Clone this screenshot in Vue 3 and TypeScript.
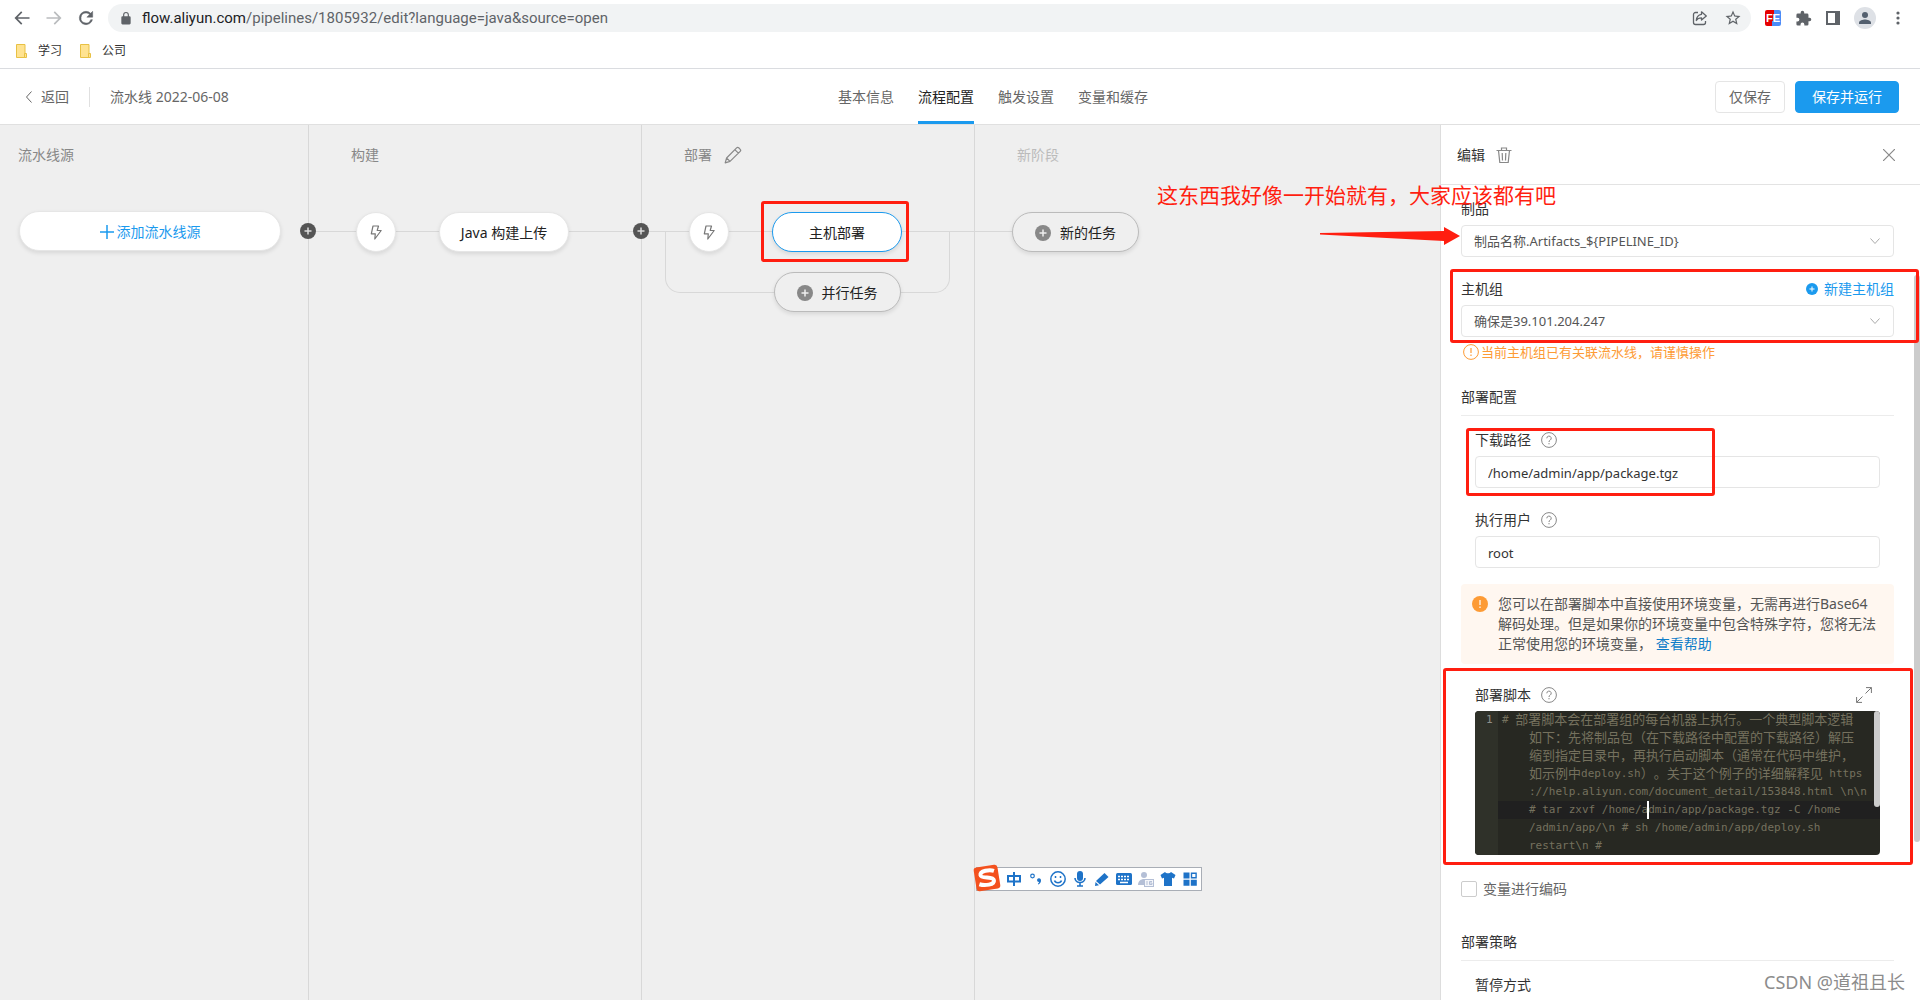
<script setup lang="ts">
import { ref } from 'vue'

interface Bookmark { label: string }
interface ScriptRow { text: { t: string; wide: boolean }[]; first: boolean; active: boolean }

const bookmarks: Bookmark[] = [{ label: '学习' }, { label: '公司' }]
const tabs: string[] = ['基本信息', '流程配置', '触发设置', '变量和缓存']
const activeTab = ref(1)

const artifact = ref('制品名称.Artifacts_${PIPELINE_ID}')
const hostGroup = ref('确保是39.101.204.247')
const downloadPath = ref('/home/admin/app/package.tgz')
const runUser = ref('root')
const encodeVars = ref(false)

const lines: string[] = [
  '# 部署脚本会在部署组的每台机器上执行。一个典型脚本逻辑',
  '如下：先将制品包（在下载路径中配置的下载路径）解压',
  '缩到指定目录中，再执行启动脚本（通常在代码中维护，',
  '如示例中deploy.sh）。关于这个例子的详细解释见 https',
  '://help.aliyun.com/document_detail/153848.html \\n\\n',
  '# tar zxvf /home/admin/app/package.tgz -C /home',
  '/admin/app/\\n # sh /home/admin/app/deploy.sh',
  'restart\\n #',
]

// Full-width runs are two code columns per glyph, so they get their own size.
const rows: ScriptRow[] = lines.map((line, i) => ({
  text: (line.match(/[\x20-\x7e]+|[^\x20-\x7e]+/g) ?? []).map((t) => ({ t, wide: t.charCodeAt(0) > 126 })),
  first: i === 0,
  active: i === 5,
}))
</script>

<template>
  <div class="window">
    <header class="browser">
      <div class="toolbar">
        <button class="tool" aria-label="后退"><svg width="20" height="20" viewBox="0 0 24 24" fill="#5f6368"><path d="M21 11H6.8l5.6-5.6L11 4l-8 8 8 8 1.4-1.4L6.8 13H21z" /></svg></button>
        <button class="tool" aria-label="前进"><svg width="20" height="20" viewBox="0 0 24 24" fill="#babcbe"><path d="M3 11h14.2l-5.6-5.6L13 4l8 8-8 8-1.4-1.4 5.6-5.6H3z" /></svg></button>
        <button class="tool" aria-label="刷新"><svg width="20" height="20" viewBox="0 0 24 24" fill="#5f6368"><path d="M17.65 6.35A7.96 7.96 0 0 0 12 4a8 8 0 1 0 7.73 10h-2.08A6 6 0 1 1 12 6c1.66 0 3.14.69 4.22 1.78L13 11h7V4z" stroke="#5f6368" stroke-width=".6" /></svg></button>
        <div class="omnibox">
          <svg width="14" height="14" viewBox="0 0 24 24" fill="#5f6368"><path d="M18 9h-1V6.500a5 5 0 0 0-10 0V9H6a2 2 0 0 0-2 2v10a2 2 0 0 0 2 2h12a2 2 0 0 0 2-2V11a2 2 0 0 0-2-2zm-3 0H9V6.500a3 3 0 0 1 6 0z" /></svg>
          <span class="url"><b>flow.aliyun.com</b>/pipelines/1805932/edit?language=java&amp;source=open</span>
          <svg width="16" height="16" viewBox="0 0 16 16" fill="none" stroke="#5f6368" stroke-width="1.300"><path d="M6 2.500H3.500a2 2 0 0 0-2 2v8a2 2 0 0 0 2 2h8a2 2 0 0 0 2-2V11" /><path d="M9.500 1.800 14.300 6 9.500 10V7.800C7 7.800 5.300 8.700 4.300 10.500 4.500 7 6.500 4.800 9.500 4.300z" stroke-linejoin="round" /></svg>
          <svg width="18" height="18" viewBox="0 0 24 24" fill="#5f6368"><path d="m22 9.240-7.190-.62L12 2 9.190 8.630 2 9.240l5.460 4.730L5.820 21 12 17.270 18.180 21l-1.630-7.030zM12 15.400l-3.760 2.270 1-4.280-3.320-2.880 4.380-.38L12 6.100l1.710 4.040 4.380.38-3.320 2.880 1 4.280z" /></svg>
        </div>
        <div class="extensions">
          <span class="fe">FE</span>
          <svg width="17" height="17" viewBox="0 0 24 24" fill="#5f6368"><path d="M20.500 11H19V7a2 2 0 0 0-2-2h-4V3.500a2.500 2.500 0 0 0-5 0V5H4a2 2 0 0 0-2 2v3.800h1.500a2.700 2.700 0 0 1 0 5.400H2V20a2 2 0 0 0 2 2h3.800v-1.500a2.700 2.700 0 0 1 5.400 0V22H17a2 2 0 0 0 2-2v-4h1.500a2.500 2.500 0 0 0 0-5z" /></svg>
          <svg width="14" height="14" viewBox="0 0 14 14"><path d="M0 0h14v14H0z" fill="#5f6368" /><path d="M2 2h7v10H2z" fill="#fff" /></svg>
          <svg width="22" height="22" viewBox="0 0 22 22"><circle cx="11" cy="11" r="11" fill="#dee1e6" /><circle cx="11" cy="8" r="3" fill="#54606f" /><path d="M5 17v-1.500c0-2 4-3 6-3s6 1 6 3V17z" fill="#54606f" /></svg>
          <svg width="4" height="14" viewBox="0 0 4 14" fill="#5f6368"><circle cx="2" cy="2" r="1.600" /><circle cx="2" cy="7" r="1.600" /><circle cx="2" cy="12" r="1.600" /></svg>
        </div>
      </div>
      <nav class="bookmarks">
        <a v-for="b in bookmarks" :key="b.label" href="#" class="bookmark">
          <svg width="12" height="14" viewBox="0 0 12 14"><path d="M.5.5h8.500v13H.5z" fill="#ffe391" stroke="#e8c144" /><path d="M8.500 9.500h2v4h-2z" fill="#ffe391" stroke="#e8c144" /></svg>{{ b.label }}
        </a>
      </nav>
    </header>

    <header class="appbar">
      <div class="crumbs">
        <a href="#" class="back"><svg width="8" height="14" viewBox="0 0 8 14" fill="none" stroke="#666"><path d="M6.500 1.500 1.500 7l5 5.500" /></svg>返回</a>
        <span class="title">流水线 2022-06-08</span>
      </div>
      <nav class="tabs">
        <a v-for="(t, i) in tabs" :key="t" href="#" :class="{ on: i === activeTab }" @click.prevent="activeTab = i">{{ t }}</a>
      </nav>
      <div class="actions">
        <button class="btn">仅保存</button>
        <button class="btn primary">保存并运行</button>
      </div>
    </header>

    <main class="work">
      <section class="canvas">
        <div class="stage source">
          <h2>流水线源</h2>
          <button class="pill add"><svg width="14" height="14" viewBox="0 0 14 14" stroke="#1b9aee" stroke-width="1.500"><path d="M7 0v14M0 7h14" /></svg>添加流水线源</button>
        </div>

        <div class="stage">
          <h2>构建</h2>
          <div class="track">
            <button class="joint" aria-label="添加阶段"><svg width="16" height="16" viewBox="0 0 16 16"><circle cx="8" cy="8" r="8" fill="#555" /><path d="M8 4.500v7M4.500 8h7" stroke="#ddd" stroke-width="1.500" /></svg></button>
            <button class="bolt" aria-label="触发"><svg width="14" height="16" viewBox="0 0 14 16" fill="none" stroke="#777" stroke-width="1.200" stroke-linejoin="round"><path d="M4 2h5.500L8.200 6.500h4L5.800 15 6.300 9.800H2.300z" /></svg></button>
            <button class="pill">Java 构建上传</button>
          </div>
        </div>

        <div class="stage">
          <h2>部署<svg width="18" height="18" viewBox="0 0 18 18" fill="none" stroke="#888" stroke-width="1.200" stroke-linejoin="round"><path d="M1.200 16.800 2.600 12 12.600 1.800a1.500 1.500 0 0 1 2.100 0l1.500 1.500a1.500 1.500 0 0 1 0 2.100L6 15.400zM10.800 3.600l3.600 3.600M2.600 12 6 15.400" /></svg></h2>
          <div class="track">
            <span class="loop"></span>
            <button class="joint" aria-label="添加阶段"><svg width="16" height="16" viewBox="0 0 16 16"><circle cx="8" cy="8" r="8" fill="#555" /><path d="M8 4.500v7M4.500 8h7" stroke="#ddd" stroke-width="1.500" /></svg></button>
            <button class="bolt" aria-label="触发"><svg width="14" height="16" viewBox="0 0 14 16" fill="none" stroke="#777" stroke-width="1.200" stroke-linejoin="round"><path d="M4 2h5.500L8.200 6.500h4L5.800 15 6.300 9.800H2.300z" /></svg></button>
            <div class="jobs">
              <div class="marked"><button class="pill selected">主机部署</button><span class="mark job-mark"></span></div>
              <button class="pill ghost"><svg width="16" height="16" viewBox="0 0 16 16"><circle cx="8" cy="8" r="8" fill="#888" /><path d="M8 4.500v7M4.500 8h7" stroke="#eee" stroke-width="1.500" /></svg>并行任务</button>
            </div>
          </div>
        </div>

        <div class="stage last">
          <h2>新阶段</h2>
          <div class="track">
            <button class="pill ghost"><svg width="16" height="16" viewBox="0 0 16 16"><circle cx="8" cy="8" r="8" fill="#888" /><path d="M8 4.500v7M4.500 8h7" stroke="#eee" stroke-width="1.500" /></svg>新的任务</button>
          </div>
        </div>
      </section>

      <aside class="panel">
        <div class="panel-head">
          <h2>编辑</h2>
          <button class="tool" aria-label="删除"><svg width="16" height="16" viewBox="0 0 16 16" fill="none" stroke="#888" stroke-width="1.200"><path d="M.5 3.500h15M5.500 3.500V1h5v2.500M2.500 3.500l1.300 12h8.400l1.300-12M6.200 6l.3 7.500M9.800 6l-.3 7.500" /></svg></button>
          <button class="tool close" aria-label="关闭"><svg width="12" height="12" viewBox="0 0 12 12" stroke="#888" stroke-width="1.200"><path d="m0 0 12 12M12 0 0 12" /></svg></button>
        </div>

        <div class="panel-body">
          <div class="field">
            <div class="label"><label for="artifact">制品</label></div>
            <div class="select">
              <select id="artifact" v-model="artifact"><option>{{ artifact }}</option></select>
              <svg width="10" height="8" viewBox="0 0 10 8" fill="none" stroke="#aaa"><path d="m.5 1.500 4.500 5 4.500-5" /></svg>
            </div>
            <div class="note">
              <p>这东西我好像一开始就有，大家应该都有吧</p>
              <svg width="140" height="18" viewBox="0 0 140 18" fill="#ff1e10"><path d="M0 6 124 4V0l16 9-16 9v-4L0 7.500z" /></svg>
            </div>
          </div>

          <div class="field hosts">
            <div class="label">
              <label for="hosts">主机组</label>
              <a href="#"><svg width="12" height="12" viewBox="0 0 12 12"><circle cx="6" cy="6" r="6" fill="#1b9aee" /><path d="M6 3.500v5M3.500 6h5" stroke="#fff" /></svg>新建主机组</a>
            </div>
            <div class="select">
              <select id="hosts" v-model="hostGroup"><option>{{ hostGroup }}</option></select>
              <svg width="10" height="8" viewBox="0 0 10 8" fill="none" stroke="#aaa"><path d="m.5 1.500 4.500 5 4.500-5" /></svg>
            </div>
            <span class="mark host-mark"></span>
          </div>
          <p class="warn"><svg width="16" height="16" viewBox="0 0 16 16" fill="none" stroke="#fd9b35"><circle cx="8" cy="8" r="7.400" /><path d="M8 4v5M8 10.500V12" stroke-width="1.200" /></svg>当前主机组已有关联流水线，请谨慎操作</p>

          <h3>部署配置</h3>
          <div class="sub field path">
            <div class="label"><label for="path">下载路径</label><svg class="help" width="16" height="16" viewBox="0 0 16 16" fill="none" stroke="#888"><circle cx="8" cy="8" r="7.400" /><path d="M5.800 6.300a2.200 2.200 0 1 1 3.300 1.900C8.300 8.700 8 9 8 10M8 11v1.300" /></svg></div>
            <input id="path" v-model="downloadPath" type="text">
            <span class="mark path-mark"></span>
          </div>
          <div class="sub field">
            <div class="label"><label for="user">执行用户</label><svg class="help" width="16" height="16" viewBox="0 0 16 16" fill="none" stroke="#888"><circle cx="8" cy="8" r="7.400" /><path d="M5.800 6.300a2.200 2.200 0 1 1 3.300 1.900C8.300 8.700 8 9 8 10M8 11v1.300" /></svg></div>
            <input id="user" v-model="runUser" type="text">
          </div>

          <div class="notice">
            <svg width="16" height="16" viewBox="0 0 16 16"><circle cx="8" cy="8" r="8" fill="#fd9b35" /><path d="M8 4v5M8 10.500V12" stroke="#fff" stroke-width="1.200" /></svg>
            <p>您可以在部署脚本中直接使用环境变量，无需再进行Base64解码处理。但是如果你的环境变量中包含特殊字符，您将无法正常使用您的环境变量， <a href="#">查看帮助</a></p>
          </div>

          <div class="sub script">
            <div class="label"><span id="script-label">部署脚本</span><svg class="help" width="16" height="16" viewBox="0 0 16 16" fill="none" stroke="#888"><circle cx="8" cy="8" r="7.400" /><path d="M5.800 6.300a2.200 2.200 0 1 1 3.300 1.900C8.300 8.700 8 9 8 10M8 11v1.300" /></svg>
              <button class="tool expand" aria-label="展开"><svg width="16" height="16" viewBox="0 0 16 16" fill="none" stroke="#777"><path d="M10 .6h5.400V6M15.400.6 9.500 6.500M.6 10v5.400H6M.6 15.400l5.900-5.900" /></svg></button>
            </div>
            <div class="editor" role="textbox" aria-multiline="true" aria-labelledby="script-label">
              <div v-for="(r, i) in rows" :key="i" class="row" :class="{ active: r.active }">
                <span class="gutter">{{ r.first ? 1 : '' }}</span>
                <code :class="{ wrapped: !r.first }"><span v-for="(s, j) in r.text" :key="j" :class="{ wide: s.wide }">{{ s.t }}</span></code>
                <i v-if="r.active" class="caret"></i>
              </div>
              <span class="thumb"></span>
            </div>
            <span class="mark script-mark"></span>
          </div>

          <label class="check"><input v-model="encodeVars" type="checkbox">变量进行编码</label>

          <h3>部署策略</h3>
          <div class="sub label pause">暂停方式</div>
        </div>
        <span class="scroll"></span>
        <span class="watermark">CSDN @道祖且长</span>
      </aside>
    </main>

    <div class="ime">
      <svg class="ime-logo" width="28" height="28" viewBox="0 0 28 28"><g transform="rotate(-9 14 14)"><rect x="2" y="2" width="24" height="24" rx="3" fill="#f4511e" /><path d="M22 8C18 6 8 5.500 8 10.300c0 4 12.500 2.600 12.500 7 0 4.700-10 4.200-15 1.700" fill="none" stroke="#fff" stroke-width="4" /></g></svg>
      <svg width="16" height="16" viewBox="0 0 16 16" fill="none" stroke="#1e73c8" stroke-width="2"><path d="M2 5h12v5.500H2zM8 1v14" /></svg>
      <svg width="16" height="16" viewBox="0 0 16 16" fill="#1e73c8"><circle cx="4.500" cy="5" r="1.800" fill="none" stroke="#1e73c8" stroke-width="1.200" /><path d="M9 9a2 2 0 0 1 4 .5c0 2-1.200 3.500-3 4v-1c.8-.4 1-.9 1-1.500A2 2 0 0 1 9 9z" /></svg>
      <svg width="16" height="16" viewBox="0 0 16 16" fill="none" stroke="#1e73c8" stroke-width="1.500"><circle cx="8" cy="8" r="7.200" /><path d="M5.500 5v2M10.500 5v2M4.500 9.500c1 3 6 3 7 0" /></svg>
      <svg width="16" height="16" viewBox="0 0 16 16" fill="#1e73c8"><rect x="5" y="0" width="6" height="10" rx="3" /><path d="M3 7c0 6 10 6 10 0M8 11.500V15M5 15h6" fill="none" stroke="#1e73c8" stroke-width="1.600" /></svg>
      <svg width="16" height="16" viewBox="0 0 16 16" fill="#1e73c8"><path d="m2 10 8.500-8 4 4L6 13.500zM1.500 11l3.500 3.300L1 15z" /></svg>
      <svg width="16" height="16" viewBox="0 0 16 16"><rect y="2" width="16" height="12" rx="1.500" fill="#1e73c8" /><path d="M2 5.500h12M2 8.500h12" stroke="#fff" stroke-width="1.500" stroke-dasharray="2 1" /><path d="M4 11.500h8" stroke="#fff" stroke-width="1.500" /></svg>
      <svg width="16" height="16" viewBox="0 0 16 16" fill="#b4bfd6"><circle cx="6" cy="4" r="3" /><path d="M0 14c0-8 12-8 12 0z" /><rect x="6.500" y="8.500" width="9" height="7" fill="#f4f6fa" stroke="#b4bfd6" /><path d="M9 10v4M14 10.500h-2.500v3H14V12h-2.500" fill="none" stroke="#b4bfd6" /></svg>
      <svg width="16" height="16" viewBox="0 0 16 16" fill="#1e73c8"><path d="M5 1c1 1.800 5 1.800 6 0l4.500 3L14 7.500l-2-.8V15H4V6.700l-2 .8L.5 4z" /></svg>
      <svg width="16" height="16" viewBox="0 0 16 16" fill="#1e73c8"><path d="M1.500 1.500h6v6h-6zM1.500 8.800h6v6h-6zM8.800 8.800h6v6h-6z" /><path d="M9.500 2.200h4.600v4.600H9.500z" fill="#fff" stroke="#1e73c8" stroke-width="1.400" /></svg>
    </div>
  </div>
</template>

<style>
body { margin: 0; }
</style>

<style scoped>
* { box-sizing: border-box; }
.window { display: flex; flex-direction: column; height: 100vh; overflow: hidden; position: relative; background: #fff; color: #333; font: 14px/20px "Noto Sans", "Noto Sans CJK SC", sans-serif; }
button, input, select { font: inherit; color: inherit; margin: 0; }
button { padding: 0; border: 0; background: none; cursor: pointer; }
a { color: inherit; text-decoration: none; }
h2, h3, p { margin: 0; font-size: 14px; font-weight: 400; }
svg { display: block; flex: none; }

.browser { border-bottom: 1px solid #dadce0; flex: none; }
.toolbar { display: flex; align-items: center; height: 36px; padding: 0 20px 0 12px; }
.toolbar > .tool { margin-right: 12px; }
.omnibox { flex: 1; display: flex; align-items: center; height: 28px; border-radius: 14px; background: #f1f3f4; padding: 0 9px 0 11px; gap: 16px; }
.url { flex: 1; color: #5f6368; margin-left: -7px; font-family: Roboto, sans-serif; font-size: 15px; }
.url b { font-weight: 400; color: #202124; }
.extensions { display: flex; align-items: center; gap: 14px; margin-left: 14px; }
.extensions svg:last-child { margin: 0 0 0 6px; }
.fe { width: 16px; height: 16px; border-radius: 2px; background: linear-gradient(100deg, #e60000 50%, #4a8cf7 50%); color: #fff; font: 700 11px/16px "Liberation Sans", sans-serif; text-align: center; }
.bookmarks { display: flex; gap: 18px; height: 32px; padding: 5px 16px; font-size: 12px; }
.bookmark { display: flex; align-items: center; gap: 10px; height: 20px; }

.appbar { display: flex; height: 56px; flex: none; padding: 0 21px 0 25px; border-bottom: 1px solid #e0e0e0; color: #666; }
.crumbs { flex: 1; display: flex; align-items: center; }
.back { display: flex; align-items: center; gap: 8px; padding-right: 20px; border-right: 1px solid #e0e0e0; }
.title { margin-left: 20px; }
.tabs { display: flex; gap: 24px; margin-left: 62px; }
.tabs a { display: flex; align-items: center; border-top: 3px solid transparent; border-bottom: 3px solid transparent; }
.tabs .on { color: #222; border-bottom-color: #1b9aee; }
.actions { flex: 1; display: flex; align-items: center; justify-content: flex-end; gap: 10px; }
.btn { height: 32px; padding: 0 13px; border: 1px solid #e5e5e5; border-radius: 4px; }
.primary { background: #1b9aee; border-color: #1b9aee; color: #fff; padding: 0 16px; }

.work { flex: 1; min-height: 0; display: flex; }
.canvas { flex: 1; min-width: 0; display: flex; background: #efefef; }
.stage { width: 333px; flex: none; border-right: 1px solid #d8d8d8; padding-top: 20px; }
.stage h2 { display: flex; align-items: center; gap: 12px; height: 20px; padding-left: 42px; color: #888; }
.source { width: 309px; }
.source h2 { padding-left: 18px; }
.last { flex: 1; border: 0; }
.last h2 { color: #bbb; }
.pill { display: flex; align-items: center; justify-content: center; width: 130px; height: 40px; border: 1px solid #e6e6e6; border-radius: 20px; background: #fff; box-shadow: 0 2px 4px rgba(0, 0, 0, .1); color: #222; padding-top: 2px; white-space: nowrap; }
.add { width: 262px; margin: 46px 0 0 19px; gap: 3px; color: #1b9aee; }
.selected { border-color: #1b9aee; }
.ghost { width: 127px; background: #efefef; border-color: #bbb; gap: 9px; }
.track { position: relative; display: flex; gap: 43px; margin-top: 47px; padding-left: 47px; }
.track::before { content: ""; position: absolute; left: 0; right: 0; top: 19px; height: 1px; background: #d8d8d8; }
.bolt { position: relative; display: flex; align-items: center; justify-content: center; width: 40px; height: 40px; border: 1px solid #e6e6e6; border-radius: 50%; background: #fff; box-shadow: 0 2px 4px rgba(0, 0, 0, .1); flex: none; }
.track .pill { position: relative; }
.joint { position: absolute; left: -9px; top: 11px; z-index: 1; }
.jobs { display: flex; flex-direction: column; align-items: center; gap: 20px; }
.marked { position: relative; }
.loop { position: absolute; left: 23px; right: 24px; top: 19px; height: 62px; border: 1px solid #d8d8d8; border-top: 0; border-radius: 0 0 15px 15px; }
.last .track { padding-left: 37px; }
.last .track::before { right: auto; width: 37px; }

.mark { position: absolute; border: 3px solid #ff1e10; border-radius: 3px; pointer-events: none; }
.job-mark { inset: -11px -7px -10px -11px; }

.panel { position: relative; width: 480px; flex: none; border-left: 1px solid #ddd; background: #fff; }
.panel-head { display: flex; align-items: center; gap: 11px; height: 60px; padding: 0 25px 0 16px; border-bottom: 1px solid #e3e3e3; }
.close { margin-left: auto; }
.panel-body { padding: 14px 26px 0 20px; }
.label { display: flex; align-items: center; height: 20px; }
.field { position: relative; margin-bottom: 22px; }
.label a { display: flex; align-items: center; gap: 6px; margin-left: auto; color: #1b9aee; }
.select { position: relative; margin-top: 6px; }
.select select, input[type="text"] { display: block; width: 100%; height: 32px; border: 1px solid #e5e5e5; border-radius: 4px; background: #fff; outline: 0; padding: 0 12px; font-size: 13px; }
input[type="text"] { padding-top: 2px; }
.select select { appearance: none; color: #555; }
.select svg { position: absolute; right: 14px; top: 12px; pointer-events: none; }
.note { position: absolute; right: 434px; top: 28px; z-index: 2; color: #ff1e10; pointer-events: none; }
.note p { position: absolute; right: -96px; bottom: 36px; font-size: 21px; line-height: 28px; white-space: nowrap; }
.hosts { margin-bottom: 0; }
.host-mark { inset: -10px -25px -6px -11px; z-index: 2; }
.warn { display: flex; align-items: center; gap: 2px; height: 20px; margin: 5px 0 25px 2px; font-size: 13px; color: #fd9b35; }
h3 { height: 29px; border-bottom: 1px solid #ececec; }
.sub { margin-left: 14px; margin-right: 14px; }
.path { margin-top: 14px; }
.sub .label { margin-bottom: 6px; }
.help { margin-left: 10px; }
.path-mark { inset: -2px 165px -8px -9px; }
.notice { display: flex; gap: 10px; margin-top: -6px; padding: 10px 16px 10px 11px; border-radius: 4px; background: #fff7f0; color: #555; }
.notice svg { margin-top: 2px; }
.notice a { color: #0f7dc8; }
.script { position: relative; margin-top: 21px; }
.expand { margin-left: auto; margin-right: 8px; }
.editor { position: relative; border-radius: 4px; overflow: hidden; background: #272822; color: #75715e; font: 11px/18px "DejaVu Sans Mono", "Noto Sans CJK SC", monospace; text-spacing-trim: space-all; }
.row { position: relative; display: flex; height: 18px; }
.gutter { width: 23px; flex: none; padding-left: 11px; background: #2f3129; color: #8f908a; }
.row code { flex: 1; padding-left: 4px; font: inherit; white-space: pre; display: flex; }
.row code.wrapped { padding-left: 31px; }
.active code { background: #202020; }
.wide { font-size: 13px; }
.caret { position: absolute; left: 172px; top: 0; width: 2px; height: 18px; background: #fff; }
.thumb { position: absolute; right: 0; top: 0; width: 6px; height: 96px; border-radius: 3px; background: #ccc; }
.script-mark { inset: -17px -33px -10px -32px; }
.check { display: flex; align-items: center; gap: 6px; height: 20px; margin: 24px 0 33px; color: #666; }
.check input { appearance: none; width: 16px; height: 16px; border: 1px solid #ccc; border-radius: 2px; background: #fff; }
.pause { margin-top: 14px; }
.scroll { position: absolute; right: 0; top: 150px; width: 6px; height: 567px; border-radius: 3px; background: #ccc; }
.watermark { position: absolute; right: 15px; bottom: 6px; color: #8c8c8c; font-size: 18px; line-height: 24px; }

.ime { position: absolute; left: 976px; bottom: 109px; display: flex; align-items: center; gap: 6px; height: 24px; padding-right: 3px; border: 1px solid #a9aeb6; background: #fff; }
.ime-logo { margin: 0 -1px 2px -4px; }
</style>
